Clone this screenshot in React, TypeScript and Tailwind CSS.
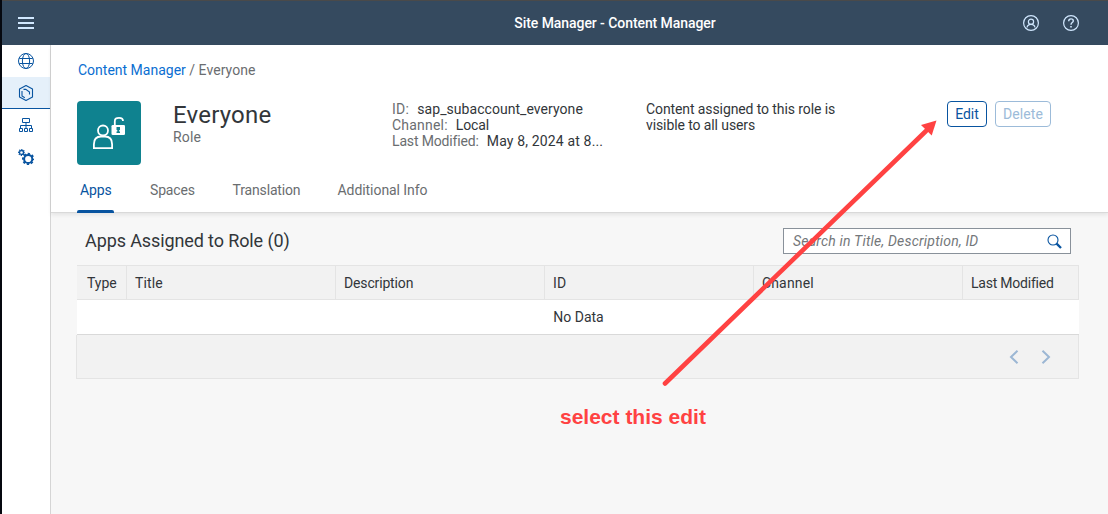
import React from 'react';

const svgBase = { fill: 'none', stroke: 'currentColor' } as const;

function GlobeIcon() {
  return (
    <svg width="16" height="16" viewBox="0 0 16 16" {...svgBase} strokeWidth="1">
      <circle cx="8" cy="8" r="7.5" />
      <ellipse cx="8" cy="8" rx="3.6" ry="7.5" />
      <path d="M1.3 5.5H14.7M1.3 10.5H14.7" />
    </svg>
  );
}

function HexagonIcon() {
  return (
    <svg width="16" height="16" viewBox="0 0 16 16" {...svgBase} strokeWidth="1.1">
      <path d="M8 .6 14.5 4v8L8 15.4 1.5 12V4Z" strokeLinejoin="round" />
      <path d="M5.500 4.400H7.800L11.500 7V9.500M4 6v5l2.800 1.700" />
    </svg>
  );
}

function OrgIcon() {
  return (
    <svg width="16" height="16" viewBox="0 0 16 16" {...svgBase} strokeWidth="1">
      <path d="M4.500 1.500h7v4h-7zM8 5.500v6M2.500 11V8.500h11V11M1.500 11.500h3v3h-3zM6.500 11.500h3v3h-3zM11.500 11.500h3v3h-3z" />
    </svg>
  );
}

function GearsIcon() {
  return (
    <svg width="16" height="16" viewBox="0 0 16 16" {...svgBase}>
      <circle cx="10.200" cy="10" r="4.100" strokeWidth="2" />
      <circle cx="10.200" cy="10" r="5.300" strokeWidth="1.800" strokeDasharray="2.300 1.863" strokeDashoffset="1.150" />
      <circle cx="3.500" cy="3.500" r="2" strokeWidth="1.300" />
      <circle cx="3.500" cy="3.500" r="2.900" strokeWidth="1.200" strokeDasharray="1.250 1.028" strokeDashoffset=".6" />
    </svg>
  );
}

function RoleIcon() {
  return (
    <svg width="32" height="32" viewBox="0 0 32 32" fill="none" stroke="#fff" strokeWidth="1.800">
      <circle cx="10" cy="13.500" r="5" />
      <path d="M.9 31.100v-3.900Q.9 19.500 8 19.500h4q7.100 0 7.100 7.700v3.900Z" />
      <path d="M21.800 8V4.200C21.800 1.600 23.400.9 26 .9s4 1 4 3" />
      <rect x="18.500" y="8" width="13.500" height="10" rx="1.300" fill="#fff" stroke="none" />
      <path d="M23.500 10h3.500v3h-.8v1.600h.8V16h-3.500v-1.400h.8V13h-.8z" fill="#0f828f" stroke="none" />
    </svg>
  );
}

const navItems = [GlobeIcon, HexagonIcon, OrgIcon, GearsIcon];

const tabs = [
  { label: 'Apps', cls: 'w-[70px] pl-[3px]', text: 'text-[#0854a0] tracking-[-0.1px]' },
  { label: 'Spaces', cls: 'w-[82.500px] pl-[3px]', text: 'tracking-[-0.15px]' },
  { label: 'Translation', cls: 'w-[105px] pl-[3px]', text: 'tracking-[-0.15px]' },
  { label: 'Additional Info', cls: 'w-[96px] pl-[3px]', text: 'tracking-[-0.06px]' },
];

const columns = [
  { label: 'Type', cls: 'pl-[10px] tracking-[-0.05px]' },
  { label: 'Title', cls: 'pl-2 tracking-[0.1px]' },
  { label: 'Description', cls: 'pl-2 tracking-[-0.15px]' },
  { label: 'ID', cls: 'pl-2 tracking-[0.2px]' },
  { label: 'Channel', cls: 'pl-2 tracking-[0.15px]' },
  { label: 'Last Modified', cls: 'pl-2 tracking-[-0.22px]' },
];

const details = [
  { label: 'ID:', value: 'sap_subaccount_everyone', labelCls: 'tracking-[0.3px]', valueCls: 'tracking-[0.05px]' },
  { label: 'Channel:', value: 'Local', labelCls: 'tracking-[0.2px]', valueCls: 'tracking-[-0.1px]' },
  { label: 'Last Modified:', value: 'May 8, 2024 at 8...', labelCls: 'tracking-[-0.15px]', valueCls: 'tracking-[0.15px]' },
];

function Annotation() {
  return (
    <div className="pointer-events-none absolute inset-y-0 -left-0.5 right-0">
      <svg className="absolute left-0 top-0" width="1108" height="514" viewBox="0 0 1108 514">
        <path d="M665 383.500 926 131" stroke="#ff4242" strokeWidth="4.600" strokeLinecap="round" />
        <path d="M936.500 120.500 931.700 135.500 921 125z" fill="#ff4242" />
      </svg>
      <div className="absolute left-[560px] top-[404px] whitespace-nowrap font-['Liberation_Sans',sans-serif] text-[21px] font-bold leading-[26px] text-[#ff4242]">
        select this edit
      </div>
    </div>
  );
}

export default function App() {
  return (
    <div className="relative flex h-[514px] w-[1108px] flex-col overflow-hidden border-l-2 border-[#05080f] bg-[#f7f7f7] font-[Roboto,sans-serif] text-sm leading-4 text-[#32363a]">
      <header className="flex h-[45px] shrink-0 items-center border-t border-t-[#4a4a4a] bg-[#354a5f] pl-4 pr-[29px] text-[#d1e8ff]">
        <svg width="16" height="12" viewBox="0 0 16 12" fill="currentColor">
          <path d="M0 0h16v2H0zM0 5h16v2H0zM0 10h16v2H0z" />
        </svg>
        <h1 className="flex-1 pl-[173px] text-center font-medium tracking-[-0.07px] text-white">Site Manager - Content Manager</h1>
        <div className="flex gap-6">
          <svg width="16" height="16" viewBox="0 0 16 16" {...svgBase} strokeWidth="1.200">
            <circle cx="8" cy="8" r="7.400" />
            <circle cx="8" cy="6.700" r="2.600" />
            <path d="M4 12.500c.3-2 1.600-3.200 4-3.200s3.700 1.200 4 3.200" />
          </svg>
          <svg width="16" height="16" viewBox="0 0 16 16" {...svgBase} strokeWidth="1.200">
            <circle cx="8" cy="8" r="7.400" />
            <path d="M5.700 6.200c0-1.500 1-2.300 2.300-2.300s2.300.8 2.300 2c0 1.700-2.300 1.700-2.300 3.800" strokeWidth="1.400" />
            <path d="M8 10.900v1.700" strokeWidth="1.600" />
          </svg>
        </div>
      </header>
      <div className="flex min-h-0 flex-1">
        <nav className="flex w-[49px] shrink-0 flex-col border-r border-[#d5d5d5] bg-white text-[#0854a0]">
          {navItems.map((Icon, i) => (
            <div
              key={i}
              className={i === 1 ? 'flex h-8 items-center justify-center border-b border-[#0854a0] bg-[#e5f0fa]' : 'flex h-8 items-center justify-center'}
            >
              <Icon />
            </div>
          ))}
        </nav>
        <main className="flex flex-1 flex-col">
          <section className="flex h-[168px] shrink-0 flex-col border-b border-[#d9d9d9] bg-white shadow-[0_2px_4px_rgba(0,0,0,0.08)]">
            <div className="pl-[27px] pt-[17px] text-[#6a6d70]">
              <span className="text-[#0a6ed1]">Content Manager</span> <span>/</span> <span className="tracking-[0.05px]">Everyone</span>
            </div>
            <div className="flex pl-[26px] pt-[23px]">
              <div className="flex h-16 w-16 items-center justify-center rounded-[4px] bg-[#0f828f]">
                <RoleIcon />
              </div>
              <div className="ml-8 w-[219px]">
                <h2 className="text-2xl leading-7 tracking-[0.2px]">Everyone</h2>
                <div className="tracking-[0.2px] text-[#6a6d70]">Role</div>
              </div>
              <div className="w-[254px]">
                {details.map((d) => (
                  <div key={d.label} className="flex gap-2">
                    <span className={`text-[#6a6d70] ${d.labelCls}`}>{d.label}</span>
                    <span className={d.valueCls}>{d.value}</span>
                  </div>
                ))}
              </div>
              <p className="w-[301px] tracking-[-0.1px]">
                Content assigned to this role is
                <br />
                visible to all users
              </p>
              <div className="flex gap-2">
                <button className="h-[26px] w-10 rounded-[4px] border border-[#0854a0] text-[#0854a0]">Edit</button>
                <button className="h-[26px] w-14 rounded-[4px] border border-[#9cbbd9] tracking-[0.1px] text-[#9cbbd9]">Delete</button>
              </div>
            </div>
            <div className="flex pl-[26px] text-[#6a6d70]">
              {tabs.map((t, i) => (
                <div key={t.label} className={`flex h-12 shrink-0 flex-col whitespace-nowrap pt-[17px] ${t.cls}`}>
                  <span className={t.text}>{t.label}</span>
                  {i === 0 && <span className="-ml-[3px] mt-3 h-[3px] w-[37px] rounded-t-[2px] bg-[#0854a0]" />}
                </div>
              ))}
            </div>
          </section>
          <section className="flex flex-col pl-[25px] pt-[15px]">
            <div className="flex justify-between pl-[9px] pr-[37px]">
              <h3 className="pt-px text-lg leading-6 tracking-[-0.11px]">Apps Assigned to Role (0)</h3>
              <div className="flex h-[26px] w-72 items-center justify-between border border-[#89919a] bg-white pl-[9px] pr-2">
                <span className="tracking-[0.2px] italic text-[#74777a]">Search in Title, Description, ID</span>
                <svg width="15" height="15" viewBox="0 0 15 15" {...svgBase} className="text-[#0854a0]">
                  <circle cx="6" cy="6" r="5" strokeWidth="1.100" />
                  <path d="M9.600 9.600 14 14" strokeWidth="2.300" />
                </svg>
              </div>
            </div>
            <div className="ml-px mt-[11px] grid h-[35px] w-[1002px] grid-cols-[50px_209px_209px_209px_209px_116px] border-y border-[#e4e4e4] bg-[#f2f2f2]">
              {columns.map((c) => (
                <div key={c.label} className={`flex items-center border-r border-[#e4e4e4] ${c.cls}`}>{c.label}</div>
              ))}
            </div>
            <div className="ml-px flex h-[35px] w-[1002px] items-center justify-center border-b border-[#d9d9d9] bg-white pl-px">No Data</div>
            <div className="flex h-11 w-[1003px] items-center justify-end gap-[22px] border border-t-0 border-[#e4e4e4] bg-[#f2f2f2] pr-[27px] text-[#9cb7d4]">
              <svg width="10" height="14" viewBox="0 0 10 14" {...svgBase} strokeWidth="2"><path d="M8.500.8 2 7l6.500 6.200" /></svg>
              <svg width="10" height="14" viewBox="0 0 10 14" {...svgBase} strokeWidth="2"><path d="M1.500.8 8 7l-6.500 6.200" /></svg>
            </div>
          </section>
        </main>
      </div>
      <Annotation />
    </div>
  );
}
